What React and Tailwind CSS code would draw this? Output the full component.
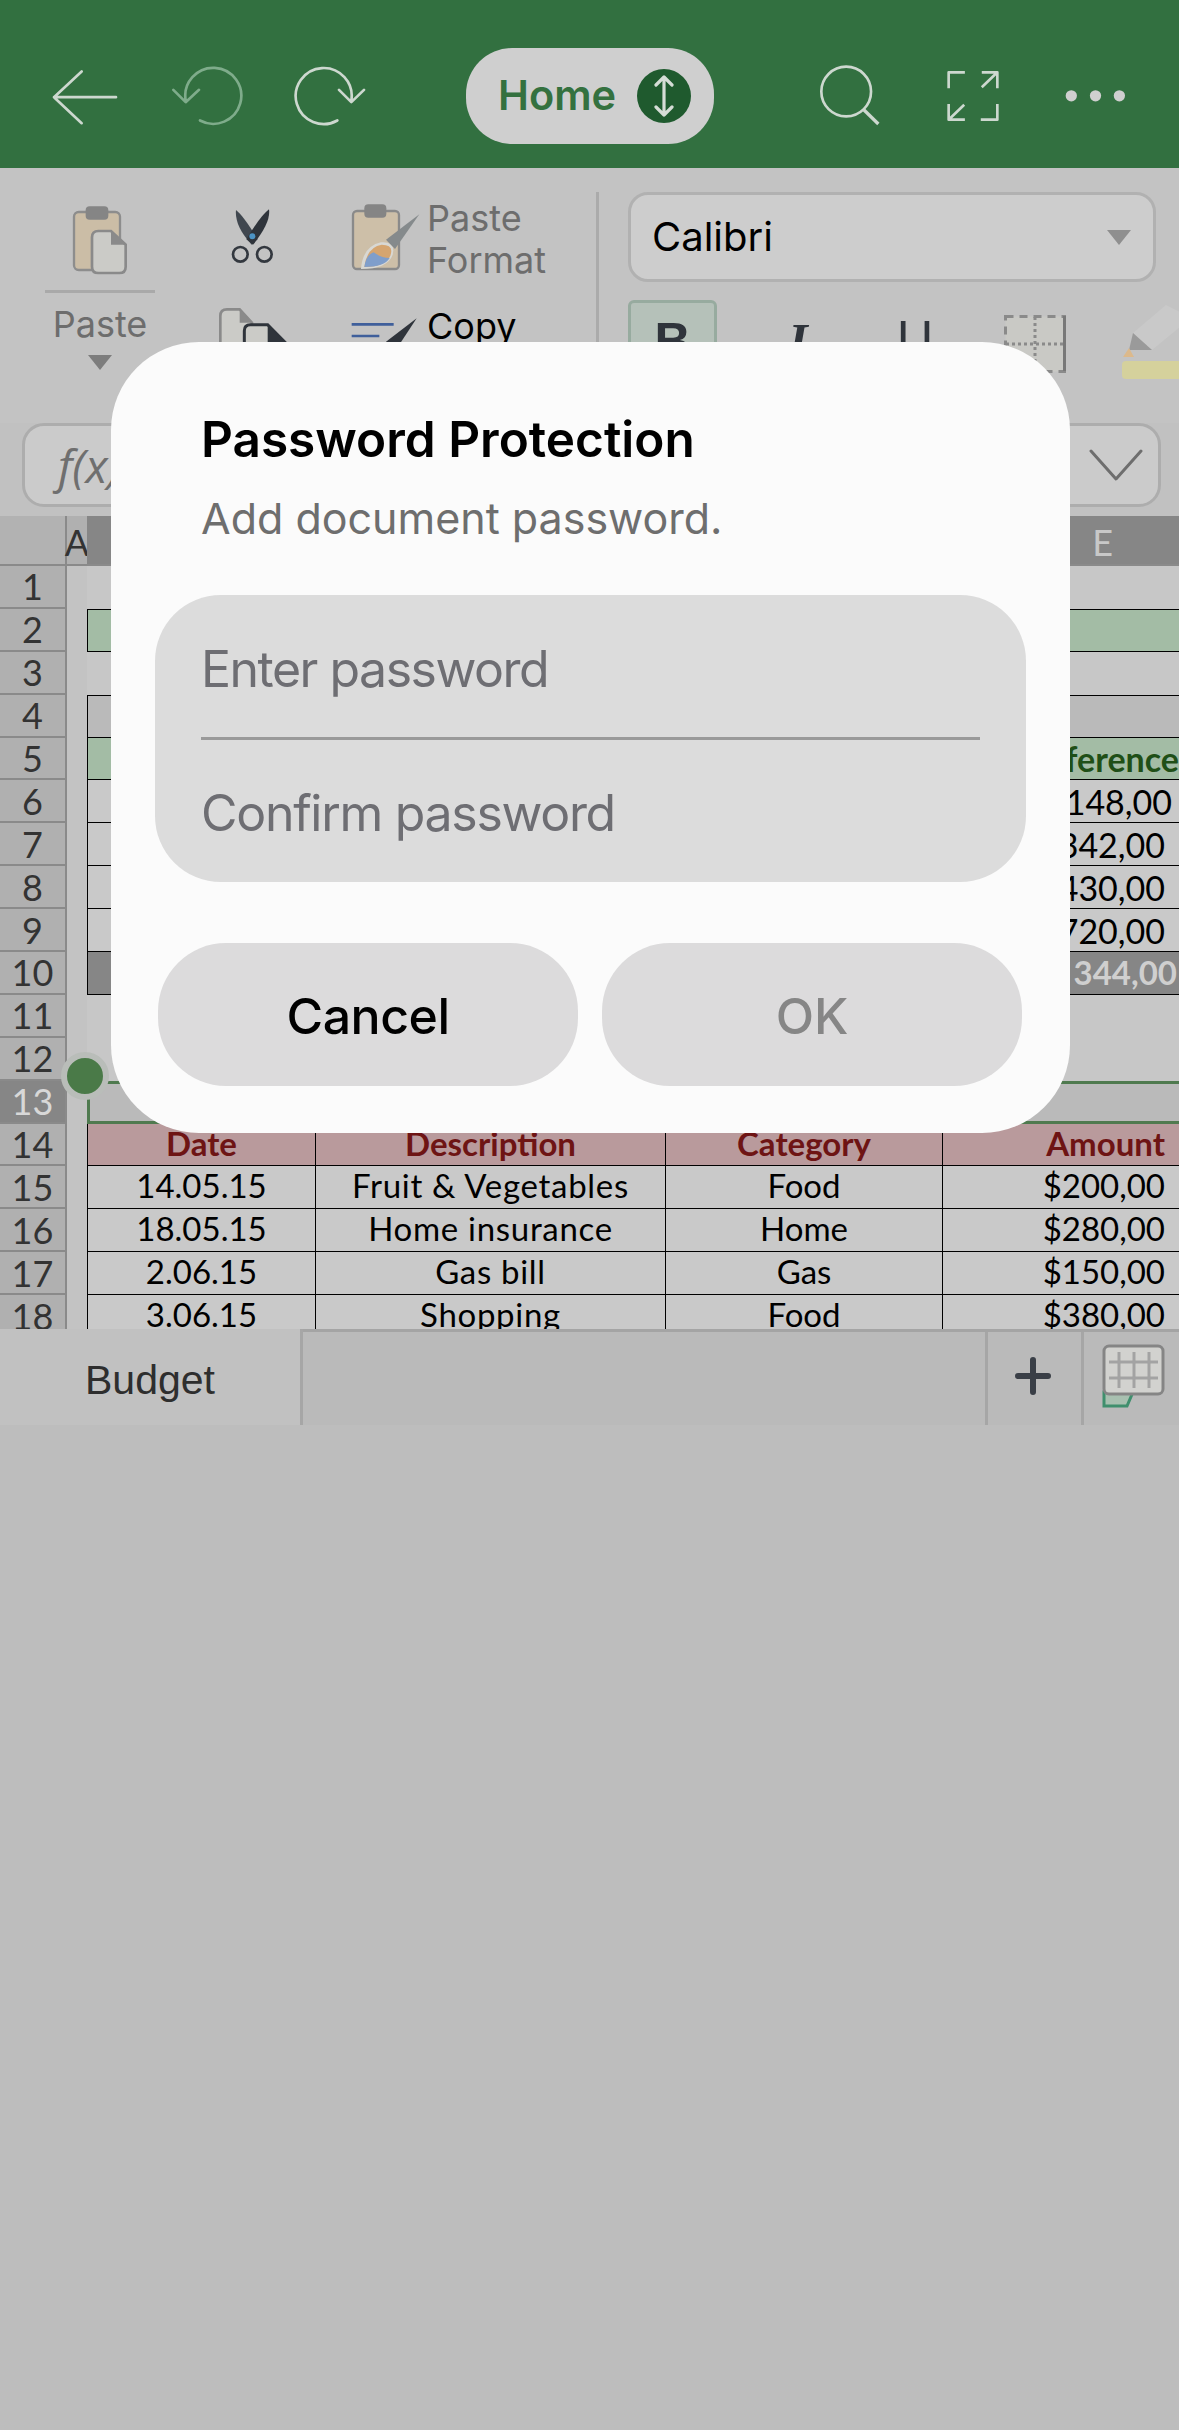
const stroke = { fill: 'none', stroke: '#cdd8cf', strokeWidth: 8, strokeLinecap: 'round', strokeLinejoin: 'round' }

const dataRows = [
  { date: '14.05.15', desc: 'Fruit & Vegetables', cat: 'Food', amount: '$200,00' },
  { date: '18.05.15', desc: 'Home insurance', cat: 'Home', amount: '$280,00' },
  { date: '2.06.15', desc: 'Gas bill', cat: 'Gas', amount: '$150,00' },
  { date: '3.06.15', desc: 'Shopping', cat: 'Food', amount: '$380,00' },
]

function TopBar() {
  return (
    <header className="flex h-[168px] items-center bg-[#327040] pt-[25px] pl-[50px]">
      <svg width="70" height="67" viewBox="60 70 210 200" {...stroke}>
        <path d="M155 95 L72 172 L155 250 M72 172 H258" />
      </svg>
      <svg className="ml-[50px]" width="73" height="67" viewBox="420 70 219 200" {...stroke} stroke="#7fac8b">
        <path d="M510 242 A84 84 0 1 0 467 182 M430 150 L467 187 L507 150" />
      </svg>
      <svg className="ml-[51px]" width="73" height="67" viewBox="790 70 219 200" {...stroke}>
        <path d="M920 242 A84 84 0 1 1 962 182 M925 150 L962 187 L1000 150" />
      </svg>
      <div className="mt-[-2px] ml-[99px] flex h-[96px] w-[248px] items-center rounded-[46px] bg-[#cfcfcf] pl-[32px]">
        <span className="text-[41.5px] leading-none font-semibold text-[#34713f]">Home</span>
        <span className="ml-[21px] flex h-[54px] w-[54px] items-center justify-center rounded-full bg-[#1f5a2e]">
          <svg width="24" height="42" viewBox="0 0 24 42" fill="none" stroke="#d5ddd6" strokeWidth="3.2" strokeLinecap="round" strokeLinejoin="round">
            <path d="M12 2 V40 M4 10 L12 2 L20 10 M4 32 L12 40 L20 32" />
          </svg>
        </span>
      </div>
      <svg className="ml-[104px]" width="63" height="67" viewBox="110 70 190 200" {...stroke}>
        <circle cx="195" cy="155" r="75" />
        <path d="M248 210 L292 253" strokeLinecap="butt" strokeWidth="10" />
      </svg>
      <svg className="ml-[65px]" width="53" height="67" viewBox="495 70 160 200" {...stroke} strokeLinecap="butt">
        <path d="M552 97 H503 V145 M603 142 L650 97 M603 97 H650 V145 M550 195 L503 240 M503 193 V240 H552 M600 240 H650 V193" />
      </svg>
      <svg className="ml-[65px]" width="63" height="67" viewBox="850 70 190 200" fill="#cfcfcf">
        <circle cx="872" cy="168" r="17" />
        <circle cx="945" cy="168" r="17" />
        <circle cx="1017" cy="168" r="17" />
      </svg>
    </header>
  )
}

function Ribbon() {
  return (
    <div className="flex h-[255px] overflow-hidden bg-[#c3c3c3] pt-[24px] pl-[45px]">
      <div className="flex w-[110px] flex-col items-center">
        <svg className="mt-[12px]" width="64" height="76" viewBox="120 50 180 228">
          <rect x="132" y="74" width="138" height="174" rx="14" fill="#cbbda6" stroke="#8d8d8d" strokeWidth="7" />
          <rect x="167" y="57" width="68" height="40" rx="12" fill="#858585" />
          <path d="M205 131 H243 L287 172 V238 Q287 257 268 257 H205 Q186 257 186 238 V150 Q186 131 205 131 Z" fill="#cbcbc7" stroke="#8a8a8a" strokeWidth="8" />
          <path d="M243 131 L287 172 H243 Z" fill="#8a8a8a" />
        </svg>
        <div className="mt-[10px] h-[3px] w-[110px] bg-[#a9a9a9]" />
        <span className="mt-[11px] text-[36px] leading-[40px] text-[#6d6d6d]">Paste</span>
        <span className="mt-[11px] h-0 w-0 border-x-[12px] border-t-[15px] border-x-transparent border-t-[#7d7d7d]" />
      </div>

      <div className="ml-[62px] flex w-[73px] flex-col items-center">
        <svg className="mt-[14px] -translate-x-[2px]" width="50" height="60" viewBox="590 50 150 180">
          <path d="M617 62 Q640 80 682 150 L664 166 Q612 110 617 62 Z" fill="#40474f" />
          <path d="M716 60 Q722 100 668 166 L648 150 Q690 80 716 60 Z" fill="#2f343b" />
          <circle cx="666" cy="141" r="9" fill="#4c93c4" />
          <circle cx="630" cy="195" r="22" fill="none" stroke="#33383f" strokeWidth="8" />
          <circle cx="702" cy="195" r="22" fill="none" stroke="#33383f" strokeWidth="8" />
        </svg>
        <svg className="mt-[40px]" width="73" height="50" viewBox="560 350 219 150">
          <path d="M590 360 H628 L665 400 V500 H570 V380 Q570 360 590 360 Z" fill="#cbcbc7" stroke="#8a8a8a" strokeWidth="8" />
          <path d="M628 360 L665 400 H628 Z" fill="#8a8a8a" />
          <path d="M660 406 H712 L765 460 V500 H642 V424 Q642 406 660 406 Z" fill="#cbcbc7" stroke="#2f343b" strokeWidth="9" />
          <path d="M712 406 L765 460 H712 Z" fill="#2f343b" />
        </svg>
      </div>

      <div className="ml-[61px] flex w-[245px] flex-col">
        <div className="flex">
          <svg className="mt-[11px] shrink-0" width="74" height="68" viewBox="60 40 222 204">
            <rect x="66" y="64" width="138" height="174" rx="12" fill="#cdbfa8" stroke="#8a8a8a" strokeWidth="7" />
            <rect x="100" y="44" width="66" height="40" rx="12" fill="#858585" />
            <path d="M90 238 Q95 170 150 158 Q195 155 185 195 Q170 238 90 238 Z" fill="#d8d8d4" />
            <path d="M100 232 Q108 172 152 165 Q190 165 178 198 Q165 230 100 232 Z" fill="#d5a570" />
            <path d="M100 232 Q105 195 128 188 Q150 205 176 205 Q160 232 100 232 Z" fill="#7f9ecb" />
            <path d="M265 74 L165 150 L192 178 Z" fill="#858a8c" />
          </svg>
          <div className="ml-[2px] flex flex-col pt-[5px] text-[36px] leading-[42px] text-[#6d6d6d]">
            <span>Paste</span>
            <span>Format</span>
          </div>
        </div>
        <div className="mt-[24px] flex">
          <svg className="mt-[9px] shrink-0" width="74" height="50" viewBox="60 375 222 150">
            <path d="M62 406 H188 M62 441 H145" stroke="#3f5f9b" strokeWidth="8" />
            <path d="M257 388 L165 458 L190 490 Z" fill="#2f343b" />
          </svg>
          <span className="ml-[2px] text-[36px] leading-[42px] text-black">Copy</span>
        </div>
      </div>

      <div className="mt-[-24px] h-[150px] w-[3px] shrink-0 translate-y-[24px] bg-[#ababab]" />

      <div className="ml-[29px] flex w-[528px] shrink-0 flex-col">
        <div className="flex h-[90px] items-center justify-between rounded-[20px] border-[3px] border-[#b1b1b1] bg-[#cdcdcd] pr-[22px] pl-[21px]">
          <span className="text-[40px] leading-none text-black">Calibri</span>
          <span className="h-0 w-0 border-x-[12px] border-t-[15px] border-x-transparent border-t-[#8f8f8f]" />
        </div>
        <div className="mt-[18px] flex font-['Liberation_Sans',sans-serif] text-[50px] leading-none text-[#2f343b]">
          <div className="flex h-[90px] w-[89px] shrink-0 items-start justify-center rounded-[6px] border-[3px] border-[#97ab9f] bg-[#b5c1b9] pt-[13px] font-bold">B</div>
          <div className="ml-[41px] w-[80px] shrink-0 pt-[16px] text-center font-['Liberation_Serif',serif] font-bold italic">I</div>
          <div className="ml-[37px] w-[80px] shrink-0 pt-[14px] text-center">U</div>
          <svg className="mt-[15px] ml-[49px] shrink-0" width="62" height="58" viewBox="0 0 62 58" fill="#c9c9c5">
            <rect x="1.5" y="1.5" width="59" height="55" stroke="#8a8a8a" strokeWidth="3" strokeDasharray="8 6" />
            <path d="M31 2 V56 M2 29 H60" fill="none" stroke="#8a8a8a" strokeWidth="3" strokeDasharray="3 3" />
            <path d="M60.5 1 V56" stroke="#787878" strokeWidth="3" />
          </svg>
          <svg className="ml-[55px] shrink-0" width="59" height="80" viewBox="0 0 59 80">
            <path d="M45 5 L12 33 L31 50 L59 27 V12 Z" fill="#c9c9c9" />
            <path d="M12 33 L8 50 H31 Z" fill="#9a9a9a" />
            <path d="M8 48 L2 57 H13 Z" fill="#dcb98b" />
            <rect x="1" y="61" width="60" height="18" rx="4" fill="#d5d19c" />
          </svg>
        </div>
      </div>
    </div>
  )
}

function FormulaBar() {
  return (
    <div className="bg-[#c1c1c1] pr-[18px] pb-[9px] pl-[22px]">
      <div className="flex h-[84px] items-center justify-between rounded-[22px] border-[3px] border-[#adadad] bg-[#cbcbcb] pr-[15px] pl-[33px]">
        <span className="font-['Open_Sans',sans-serif] text-[46px] leading-none text-[#6f6f6f] italic">f(x)</span>
        <svg width="54" height="32" viewBox="0 0 54 32" fill="none" stroke="#6e6e6e" strokeWidth="3" strokeLinecap="round" strokeLinejoin="round">
          <path d="M2 2 L27 30 L52 2" />
        </svg>
      </div>
    </div>
  )
}

function RowLabel({ n, active }) {
  return (
    <div className={active
      ? 'flex h-full w-[67px] shrink-0 items-center justify-center border-r-2 border-b-2 border-[#8a8a8a] bg-[#868686] text-[36px] leading-none text-[#d8d8d8]'
      : 'flex h-full w-[67px] shrink-0 items-center justify-center border-r-2 border-b-2 border-[#8a8a8a] bg-[#b0b0b0] text-[36px] leading-none text-[#333333]'}
    >
      {n}
    </div>
  )
}

function SheetRow({ n, active, className, children }) {
  return (
    <div className="flex h-[42.9px]">
      <RowLabel n={n} active={active} />
      <div className="h-full w-[20px] shrink-0 bg-[#c3c3c3]" />
      <div className={className}>{children}</div>
    </div>
  )
}

function AmountRow({ n, children, pad }) {
  return (
    <SheetRow n={n} className={pad === 'wide'
      ? 'flex h-full flex-1 items-center justify-end border-b border-l border-black bg-[#c9c9c9] pr-[7px] text-[34px] text-black'
      : 'flex h-full flex-1 items-center justify-end border-b border-l border-black bg-[#c9c9c9] pr-[14px] text-[34px] text-black'}
    >
      {children}
    </SheetRow>
  )
}

function Sheet() {
  return (
    <div className="h-[763px] overflow-hidden bg-[#c6c6c6] font-['Lato',sans-serif]">
      <SheetRow n={1} className="h-full flex-1 bg-[#c7c7c7]" />
      <SheetRow n={2} className="h-full flex-1 border-y border-l border-black bg-[#a3bca5]" />
      <SheetRow n={3} className="h-full flex-1 bg-[#c7c7c7]" />
      <SheetRow n={4} className="h-full flex-1 border-y border-l border-black bg-[#bababa]" />
      <SheetRow n={5} className="flex h-full flex-1 items-center justify-end overflow-hidden border-b border-l border-black bg-[#a3bca5] text-[34px] font-bold text-[#1f4f17]">
        Difference
      </SheetRow>
      <AmountRow n={6} pad="wide">$148,00</AmountRow>
      <AmountRow n={7}>$342,00</AmountRow>
      <AmountRow n={8}>$430,00</AmountRow>
      <AmountRow n={9}>$720,00</AmountRow>
      <SheetRow n={10} className="flex h-full flex-1 items-center justify-end border-b border-l border-black bg-[#868686] pr-[2px] text-[33px] font-bold text-[#cfcfcf]">
        $2 344,00
      </SheetRow>
      <SheetRow n={11} className="h-full flex-1 bg-[#c7c7c7]" />
      <SheetRow n={12} className="h-full flex-1 bg-[#c7c7c7]" />
      <SheetRow n={13} active className="h-full flex-1 border-y-[3px] border-l-[3px] border-[#4f7a4f] bg-[#bababa]" />
      <SheetRow n={14} className="grid h-full flex-1 grid-cols-[229px_350px_277px_236px] border-b border-black bg-[#b99a9c] text-[33px] leading-none font-bold text-[#6e1414]">
        <div className="flex items-center justify-center border-x border-black pb-[2px]">Date</div>
        <div className="flex items-center justify-center border-r border-black pb-[2px]">Description</div>
        <div className="flex items-center justify-center border-r border-black pb-[2px]">Category</div>
        <div className="flex items-center justify-end pr-[14px] pb-[2px]">Amount</div>
      </SheetRow>
      {dataRows.map((row, i) => (
        <SheetRow key={row.date} n={15 + i} className="grid h-full flex-1 grid-cols-[229px_350px_277px_236px] border-b border-black bg-[#c9c9c9] text-[33px] leading-none text-black">
          <div className="flex items-center justify-center border-x border-black pb-[3px]">{row.date}</div>
          <div className="flex items-center justify-center border-r border-black pb-[3px] tracking-[0.7px]">{row.desc}</div>
          <div className="flex items-center justify-center border-r border-black pb-[3px]">{row.cat}</div>
          <div className="flex items-center justify-end pr-[14px] pb-[3px]">{row.amount}</div>
        </SheetRow>
      ))}
    </div>
  )
}

function TabBar() {
  return (
    <div className="flex h-[96px] bg-[#bababa] font-['Liberation_Sans',sans-serif]">
      <div className="flex w-[303px] items-center justify-center border-r-[3px] border-[#a6a6a6] bg-[#c1c1c1] pt-[7px] text-[41px] text-[#2e2e2e]">
        Budget
      </div>
      <div className="flex flex-1 justify-end border-t-[3px] border-[#a4a4a4]">
        <div className="flex w-[96px] items-center justify-center border-l-[3px] border-[#a6a6a6] pr-[4px] pb-[6px]">
          <svg width="36" height="38" viewBox="0 0 36 38" stroke="#3a3f47" strokeWidth="6" strokeLinecap="round">
            <path d="M18 3 V35 M3 19 H33" />
          </svg>
        </div>
        <div className="w-[98px] border-l-[3px] border-[#a6a6a6] pt-[12px] pl-[18px]">
          <svg width="64" height="66" viewBox="0 0 64 66">
            <path d="M2 48 H31 L25 62 H2 Z" fill="#a8c0b0" stroke="#3f8f6d" strokeWidth="3" />
            <rect x="2" y="2" width="59" height="48" rx="5" fill="#d2d2cf" stroke="#858585" strokeWidth="3" />
            <path d="M17 8 V44 M32 8 V44 M47 8 V44 M7 18 H56 M7 34 H56" stroke="#a3a3a3" strokeWidth="3" fill="none" />
          </svg>
        </div>
      </div>
    </div>
  )
}

function PasswordDialog() {
  return (
    <div className="absolute top-[342px] left-[111px] h-[791px] w-[959px] rounded-[88px] bg-[#fbfbfb] px-[44px] pt-[65px]">
      <h2 className="pl-[46px] text-[49.5px] leading-[64px] font-semibold text-black">Password Protection</h2>
      <p className="mt-[21px] pl-[46px] text-[43px] leading-[52px] text-[#6e6e6e]">Add document password.</p>
      <div className="mt-[51px] h-[287px] rounded-[66px] bg-[#dcdcdc] px-[46px]">
        <div className="flex h-[145px] items-center border-b-[3px] border-[#9a9a9a] pt-[6px] text-[50px] tracking-[-1.5px] text-[#6e6e73]">Enter password</div>
        <div className="flex h-[142px] items-center pt-[4px] text-[50px] tracking-[-1.3px] text-[#6e6e73]">Confirm password</div>
      </div>
      <div className="mt-[61px] flex gap-[24px] px-[3px]">
        <button className="h-[143px] w-[420px] rounded-[68px] bg-[#dcdbdc] pt-[3px] text-[50px] font-medium tracking-[-0.5px] text-black">Cancel</button>
        <button className="h-[143px] w-[420px] rounded-[68px] bg-[#dcdbdc] pt-[3px] text-[50px] font-medium text-[#868686]">OK</button>
      </div>
    </div>
  )
}

export default function App() {
  return (
    <div className="relative h-[2430px] w-[1179px] overflow-hidden bg-[#bdbdbd] font-['Inter',sans-serif]">
      <TopBar />
      <Ribbon />
      <FormulaBar />
      <div className="flex h-[50px] border-b-2 border-[#8a8a8a] font-['Lato',sans-serif] text-[36px] leading-none">
        <div className="w-[67px] border-r-2 border-[#8a8a8a] bg-[#b2b2b2]" />
        <div className="flex w-[20px] items-center justify-center bg-[#b0b0b0] pt-[3px] text-[#333333]">A</div>
        <div className="flex flex-1 items-center justify-end bg-[#868686] pt-[3px] pr-[66px] text-[#c8c8c8]">E</div>
      </div>
      <Sheet />
      <TabBar />

      {/* selection handle sits over the grid */}
      <div className="absolute top-[1052px] left-[61px] h-[48px] w-[48px] rounded-full border-[6px] border-[#b9bdb9] bg-[#4a7a48]" />
      <PasswordDialog />
    </div>
  )
}
